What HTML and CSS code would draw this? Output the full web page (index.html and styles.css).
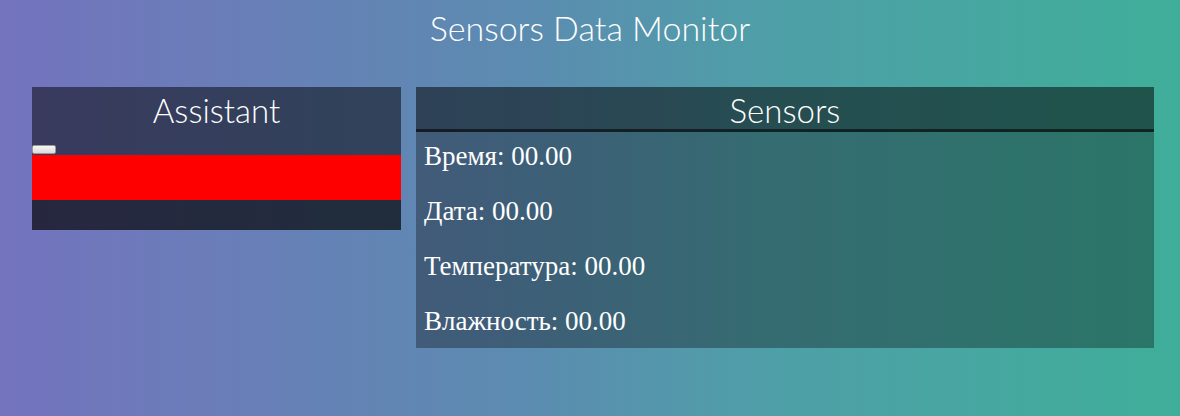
FILE: index.html
```html
<!DOCTYPE html>
<html lang="ru">
<head>
<meta charset="utf-8">
<title>Sensors Data Monitor</title>
<link rel="stylesheet" href="styles.css">
</head>
<body>
<h1 class="title">Sensors Data Monitor</h1>
<main class="panels">
  <section class="panel assistant">
    <h2 class="assistant-head">Assistant</h2>
    <button class="mini-btn" type="button"></button>
    <div class="alert-bar"></div>
    <div class="assistant-foot"></div>
  </section>
  <section class="panel sensors">
    <h2 class="sensors-head">Sensors</h2>
    <div class="readings">
      <p class="reading">Время: 00.00</p>
      <p class="reading">Дата: 00.00</p>
      <p class="reading">Температура: 00.00</p>
      <p class="reading">Влажность: 00.00</p>
    </div>
  </section>
</main>
</body>
</html>
```
FILE: styles.css
```css
html, body {
  margin: 0;
  padding: 0;
}
body {
  width: 1180px;
  height: 416px;
  overflow: hidden;
  background: linear-gradient(to right, #7473be 0%, #5b8cb0 45%, #4f9fa8 65%, #3fae99 100%);
  color: #fff;
  font-family: "Lato", "Open Sans", sans-serif;
}
.title {
  margin: 0;
  padding-top: 7px;
  height: 78px;
  box-sizing: border-box;
  text-align: center;
  font-weight: 300;
  font-size: 34px;
  line-height: 42px;
}
.panels {
  display: flex;
  align-items: flex-start;
  gap: 15px;
  padding: 9px 26px 0 32px;
}
.panel h2 {
  margin: 0;
  text-align: center;
  font-weight: 300;
  font-size: 33px;
}
.assistant {
  width: 369px;
  background: rgba(0, 0, 0, 0.5);
  display: flex;
  flex-direction: column;
  align-items: flex-start;
}
.assistant-head {
  width: 100%;
  height: 58px;
  line-height: 46px;
}
.mini-btn {
  width: 24px;
  height: 9px;
  padding: 0;
  margin: 0;
  border: 1px solid #9a9a9a;
  border-radius: 2px;
  background: linear-gradient(#f6f6f6, #dcdcdc);
}
.alert-bar {
  width: 100%;
  height: 45px;
  margin-top: 1px;
  background: #ff0000;
}
.assistant-foot {
  width: 100%;
  height: 30px;
  background: rgba(0, 0, 0, 0.32);
}
.sensors {
  width: 738px;
  background: rgba(0, 0, 0, 0.32);
}
.sensors-head {
  height: 42px;
  line-height: 46px;
  background: rgba(0, 0, 0, 0.28);
  border-bottom: 3px solid rgba(0, 0, 0, 0.55);
}
.readings {
  display: flex;
  flex-direction: column;
  gap: 24px;
  padding: 9px 8px 11px;
}
.reading {
  margin: 0;
  font-family: "Liberation Serif", "Times New Roman", serif;
  font-size: 27px;
  line-height: 31px;
}
```
